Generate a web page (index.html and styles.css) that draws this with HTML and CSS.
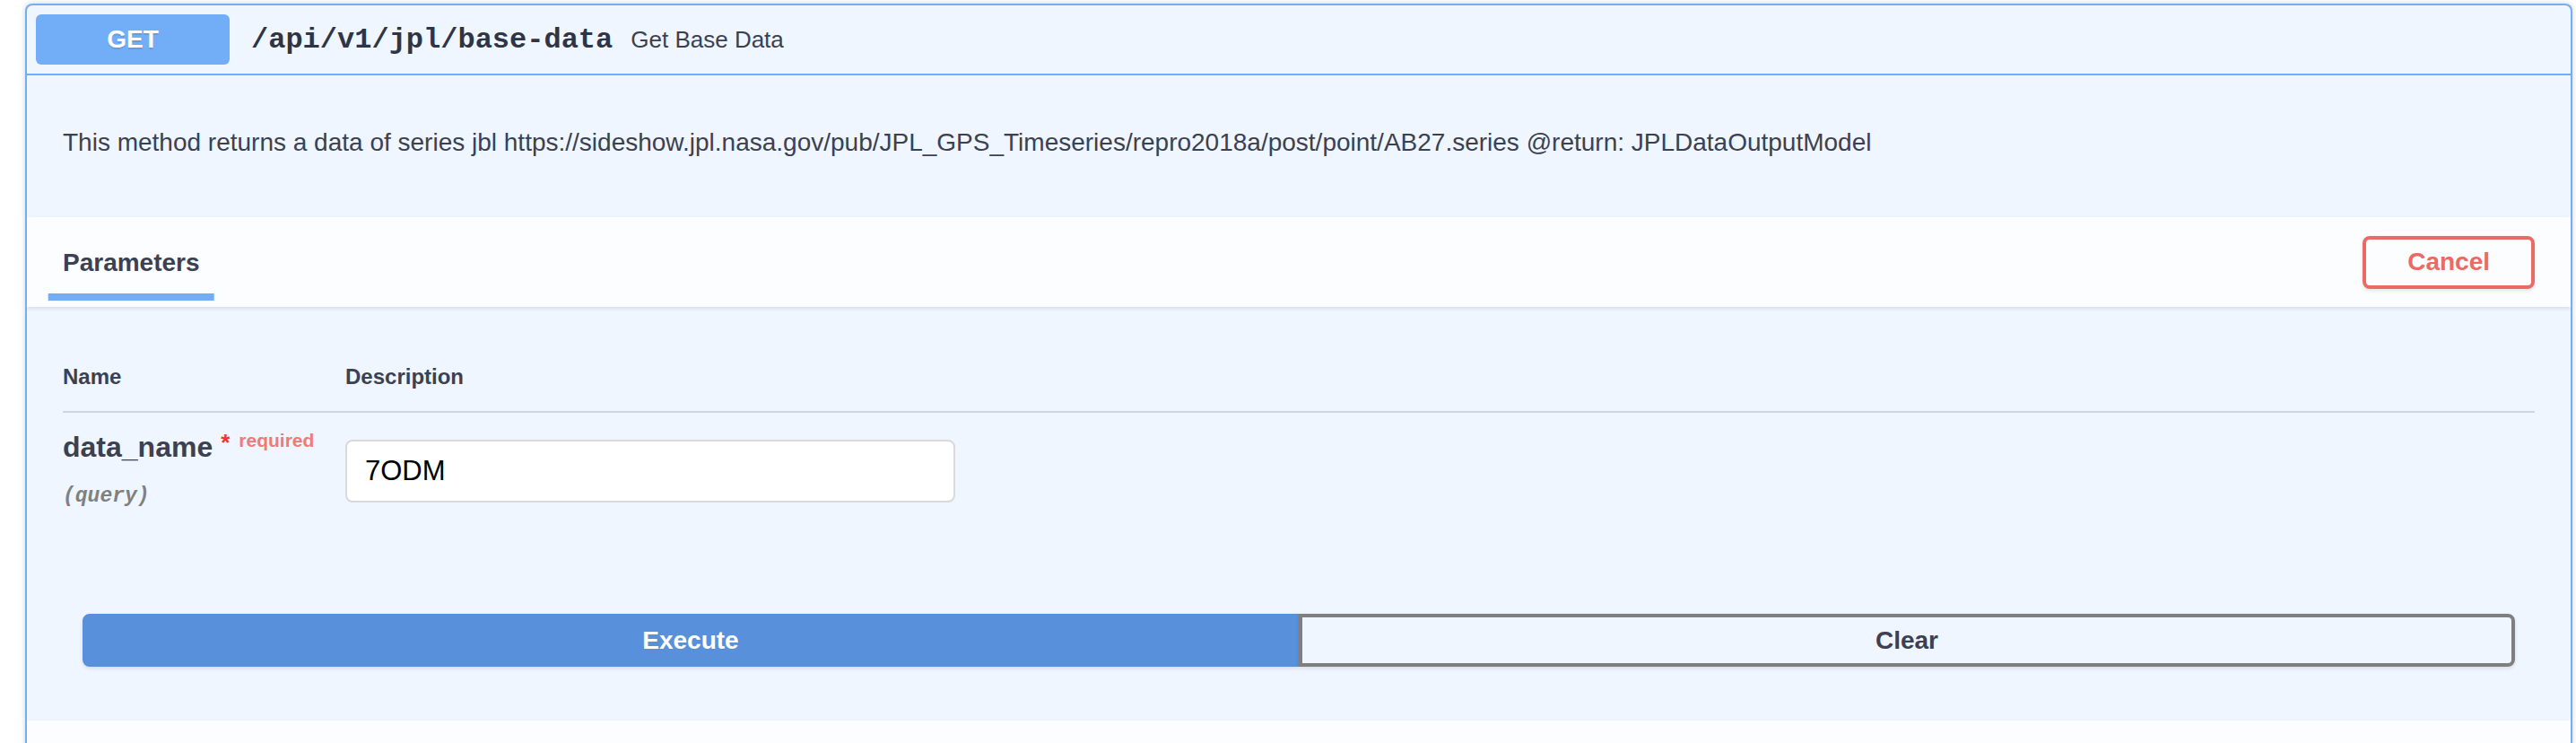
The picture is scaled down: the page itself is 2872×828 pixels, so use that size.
FILE: index.html
```html
<!DOCTYPE html>
<html>
<head>
<meta charset="utf-8">
<link rel="stylesheet" href="styles.css">
</head>
<body>
<div class="page">
  <div class="opblock">
    <div class="summary">
      <span class="method">GET</span>
      <span class="path">/api/v1/jpl/base-data</span>
      <span class="summary-desc">Get Base Data</span>
    </div>
    <div class="desc-wrapper">
      <p>This method returns a data of series jbl https://sideshow.jpl.nasa.gov/pub/JPL_GPS_Timeseries/repro2018a/post/point/AB27.series @return: JPLDataOutputModel</p>
    </div>
    <div class="section-header">
      <div class="tab"><h4>Parameters</h4></div>
      <button class="btn cancel">Cancel</button>
    </div>
    <div class="params">
      <table class="param-table">
        <thead>
          <tr><th class="col-name">Name</th><th class="col-desc">Description</th></tr>
        </thead>
        <tbody>
          <tr>
            <td class="col-name">
              <div class="param-name">data_name<span class="star">*</span><span class="req">required</span></div>
              <div class="param-in">(query)</div>
            </td>
            <td class="col-desc"><input class="param-input" type="text" value="7ODM"></td>
          </tr>
        </tbody>
      </table>
    </div>
    <div class="btn-group">
      <button class="btn execute">Execute</button>
      <button class="btn clear">Clear</button>
    </div>
    <div class="section-header responses"></div>
  </div>
</div>
</body>
</html>
```

FILE: styles.css
```css
html, body {
  margin: 0;
  padding: 0;
  background: #ffffff;
}
body {
  font-family: "Liberation Sans", Arial, sans-serif;
  color: #3b4151;
  overflow: hidden;
}
.page {
  padding: 4px 4px 0 28px;
}
.opblock {
  border: 2px solid #72adf7;
  border-bottom: none;
  border-radius: 8px 8px 0 0;
  background: #eff6ff;
  box-shadow: 0 0 6px rgba(0, 0, 0, 0.19);
  height: 860px;
  overflow: hidden;
}
.summary {
  display: flex;
  align-items: center;
  padding: 10px;
  border-bottom: 2px solid #72adf7;
}
.method {
  width: 216px;
  height: 56px;
  display: flex;
  align-items: center;
  justify-content: center;
  background: #72adf7;
  border-radius: 6px;
  color: #ffffff;
  font-weight: 700;
  font-size: 28px;
  text-shadow: 0 2px 0 rgba(0, 0, 0, 0.1);
}
.path {
  font-family: "Liberation Mono", "Courier New", monospace;
  font-weight: 700;
  font-size: 32px;
  color: #2f3545;
  padding: 0 20px 0 24px;
}
.summary-desc {
  font-size: 26px;
  color: #3b4151;
}
.desc-wrapper {
  padding: 58px 40px 66px;
}
.desc-wrapper p {
  margin: 0;
  font-size: 28px;
  line-height: 34px;
}
.section-header {
  display: flex;
  align-items: center;
  justify-content: space-between;
  height: 100px;
  box-sizing: border-box;
  padding: 0 40px;
  background: rgba(255, 255, 255, 0.8);
  box-shadow: 0 2px 4px rgba(0, 0, 0, 0.1);
}
.tab h4 {
  position: relative;
  margin: 2px 0 0;
  font-size: 28px;
  line-height: 32px;
  font-weight: 700;
  color: #3b4151;
}
.tab h4::after {
  content: "";
  position: absolute;
  left: 50%;
  bottom: -26px;
  width: 121%;
  height: 8px;
  transform: translateX(-50%);
  background: #72adf7;
}
.btn {
  font-family: "Liberation Sans", Arial, sans-serif;
  font-size: 28px;
  font-weight: 700;
  line-height: 32px;
  padding: 10px 46px;
  border: 4px solid #7f7f7f;
  border-radius: 8px;
  background: transparent;
  box-shadow: 0 2px 4px rgba(0, 0, 0, 0.1);
  color: #3b4151;
}
.cancel {
  border-color: #ec6a64;
  color: #ec6a64;
  height: 59px;
  padding: 0 46px;
}
.params {
  padding: 40px 40px 40px;
}
.param-table {
  width: 100%;
  border-collapse: collapse;
  border-spacing: 0;
}
.param-table th {
  text-align: left;
  font-size: 24px;
  line-height: 28px;
  font-weight: 700;
  padding: 24px 0;
  border-bottom: 2px solid #cfd6e0;
  color: #3b4151;
}
.param-table td {
  vertical-align: top;
  padding: 20px 20px 20px 0;
}
.col-name {
  width: 315px;
  box-sizing: border-box;
}
.param-name {
  margin-top: -8px;
  font-size: 32px;
  font-weight: 700;
  line-height: 37px;
  color: #3b4151;
  white-space: nowrap;
}
.star {
  font-size: 26px;
  color: #f2352f;
  margin-left: 9px;
  vertical-align: 7px;
}
.req {
  font-size: 21px;
  font-weight: 700;
  color: #ef7a78;
  margin-left: 10px;
  vertical-align: 11px;
}
.param-in {
  margin-top: 23px;
  font-family: "Liberation Mono", "Courier New", monospace;
  font-size: 23px;
  line-height: 26px;
  font-style: italic;
  font-weight: 700;
  color: #808080;
}
.param-input {
  display: block;
  margin: 10px 0;
  width: 680px;
  height: 70px;
  box-sizing: border-box;
  padding: 0 20px;
  border: 2px solid #d9d9d9;
  border-radius: 8px;
  background: #ffffff;
  font-family: "Liberation Sans", Arial, sans-serif;
  font-size: 31px;
  color: #000000;
  outline: none;
}
.btn-group {
  display: flex;
  padding: 54px 62px 60px;
}
.btn-group .btn {
  flex: 1;
  height: 59px;
  padding: 0;
}
.execute {
  background: #5890db;
  border-color: #5890db;
  color: #ffffff;
  border-radius: 8px 0 0 8px;
}
.clear {
  border-radius: 0 8px 8px 0;
  color: #3b4151;
}
.responses {
  height: 100px;
}
```
